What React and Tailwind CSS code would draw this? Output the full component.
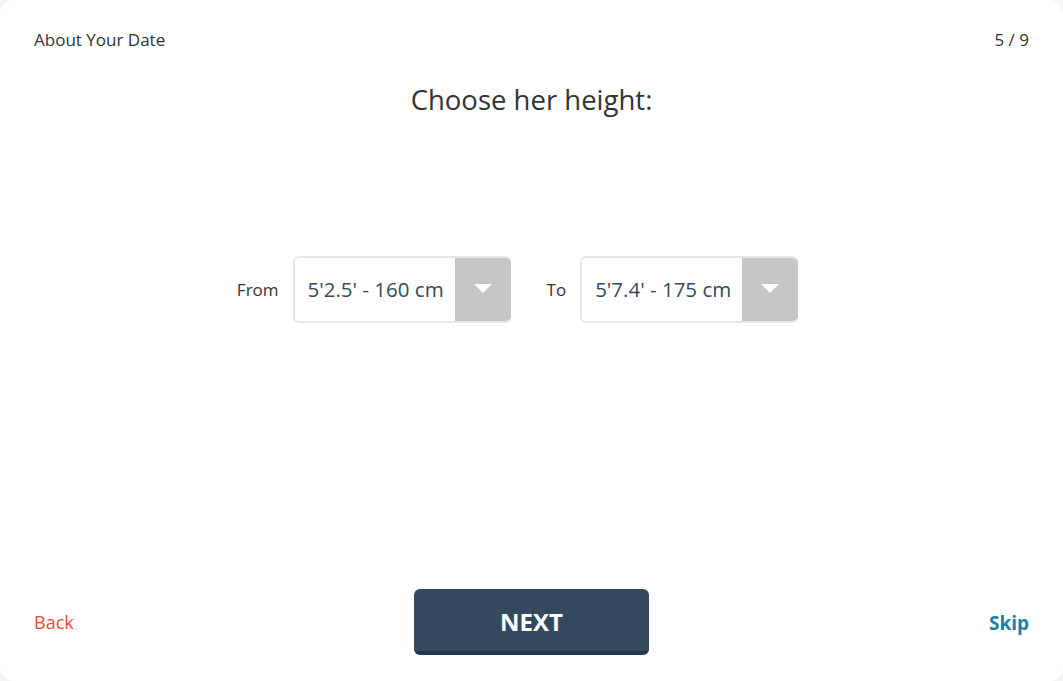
import React from "react";

function HeightSelect({ value }) {
  return (
    <div className="flex h-[67px] w-[218px] overflow-hidden rounded-[6px] border-2 border-r-0 border-[#e6e6e6] bg-white">
      <div className="flex flex-1 items-center pl-[13px] text-[20.5px] text-[#34495e]">{value}</div>
      <div className="flex w-[56px] items-center justify-center bg-[#c6c6c6]">
        <svg width="18" height="10" viewBox="0 0 18 10">
          <path d="M0 0 L18 0 L9 9 Z" fill="#ffffff" />
        </svg>
      </div>
    </div>
  );
}

export default function App() {
  return (
    <div
      className="h-[681px] w-[1063px] bg-[#f4f4f4]"
      style={{ fontFamily: '"Open Sans", sans-serif' }}
    >
      <div className="flex h-full flex-col rounded-[14px] bg-white px-[34px]">
        {/* header */}
        <div className="flex items-center justify-between pt-[27px] text-[17px] text-[#333333]">
          <span>About Your Date</span>
          <span>5 / 9</span>
        </div>

        <h1 className="mt-[26px] text-center text-[27.5px] text-[#333333]">Choose her height:</h1>

        {/* selects */}
        <div className="mt-[136px] flex items-center justify-center pr-[28px]">
          <div className="flex items-center">
            <span className="mr-[14px] text-[17px] text-[#333333]">From</span>
            <HeightSelect value="5'2.5' - 160 cm" />
          </div>
          <div className="ml-[36px] flex items-center">
            <span className="mr-[14px] text-[17px] text-[#333333]">To</span>
            <HeightSelect value="5'7.4' - 175 cm" />
          </div>
        </div>

        {/* footer */}
        <div className="mt-auto mb-[26px] flex items-center justify-between">
          <a className="w-[120px] text-[18px] text-[#e74c3c]">Back</a>
          <button className="h-[66px] w-[235px] rounded-[6px] border-b-4 border-[#22364d] bg-[#34495e] pt-[4px] text-[24px] font-bold text-white">
            NEXT
          </button>
          <a className="w-[120px] pt-[2px] text-right text-[19px] font-bold text-[#1a7fae]">Skip</a>
        </div>
      </div>
    </div>
  );
}
